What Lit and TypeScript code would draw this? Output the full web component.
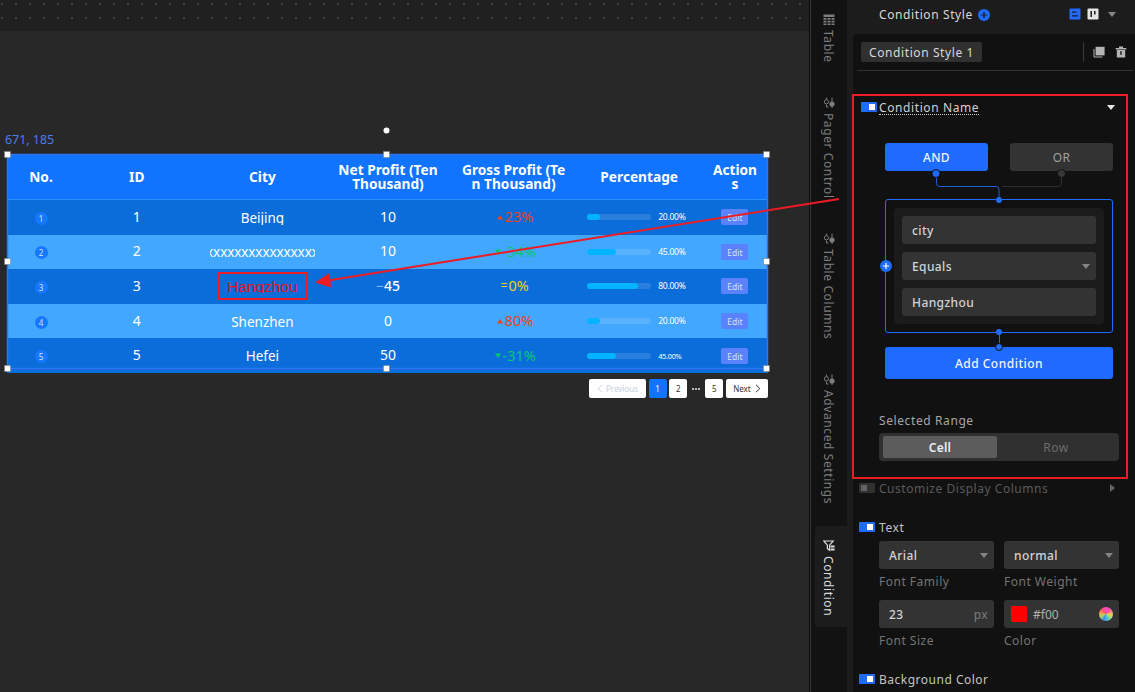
import { LitElement, css, html, svg } from "lit";
import { customElement, property } from "lit/decorators.js";
import { classMap } from "lit/directives/class-map.js";
import { styleMap } from "lit/directives/style-map.js";

interface Row {
  id: number;
  city: string;
  net: string;
  trend: "up" | "down" | "flat";
  gross: string;
  percent: number;
}

const rows: Row[] = [
  { id: 1, city: "Beijing", net: "10", trend: "up", gross: "23%", percent: 20 },
  { id: 2, city: "xxxxxxxxxxxxxxxxxx", net: "10", trend: "down", gross: "-34%", percent: 45 },
  { id: 3, city: "Hangzhou", net: "-45", trend: "flat", gross: "0%", percent: 80 },
  { id: 4, city: "Shenzhen", net: "0", trend: "up", gross: "80%", percent: 20 },
  { id: 5, city: "Hefei", net: "50", trend: "down", gross: "-31%", percent: 45 },
];

@customElement("data-table")
export class DataTable extends LitElement {
  static styles = css`
    :host {
      display: block;
      width: 761px;
      font-family: "Noto Sans", "Open Sans", sans-serif;
      font-size: 14px;
      color: #fff;
    }
    .row {
      display: grid;
      grid-template-columns: 66px repeat(5, 125.6px) 66px;
      align-items: center;
      justify-items: center;
      box-sizing: border-box;
      height: 34.6px;
      padding-left: 1px;
      background: #0b6dd9;
    }
    .row.even {
      background: #42a7ff;
    }
    .row.head {
      height: 46px;
      padding-top: 1px;
      border-bottom: 1px solid #2b90fb;
      background: #1074ff;
      font-weight: 700;
      font-size: 13.7px;
      line-height: 14px;
      text-align: center;
    }
    .head div {
      white-space: pre-line;
    }
    .index {
      width: 13px;
      height: 13px;
      margin-top: 2px;
      border-radius: 50%;
      background: #1677ff;
      font-size: 8px;
      line-height: 13px;
      text-align: center;
      color: #d5e6ff;
    }
    .value {
      line-height: 18px;
      margin-bottom: 1px;
    }
    .city {
      display: flex;
      justify-content: center;
      width: 105px;
      height: 15px;
      overflow: hidden;
      line-height: 16px;
      font-size: 13.5px;
      white-space: nowrap;
    }
    .city.hit {
      height: 14px;
      font-family: "Liberation Sans", Arial, sans-serif;
      font-size: 15.4px;
      line-height: 15px;
      color: #e3121f;
    }
    .city.long {
      letter-spacing: -0.1px;
    }
    .net .minus {
      font-weight: 300;
      opacity: 0.7;
    }
    .net .strong {
      font-weight: 500;
    }
    .gross {
      display: flex;
      align-items: center;
      gap: 1px;
      padding-left: 2px;
      font-size: 14.4px;
      line-height: 18px;
    }
    .gross svg {
      width: 8px;
      height: 8px;
    }
    .up {
      color: #ec4218;
    }
    .down {
      color: #07c868;
    }
    .flat {
      color: #f0cd1a;
    }
    .equals {
      font-size: 12px;
    }
    .progress {
      display: flex;
      align-items: center;
      gap: 7px;
      width: 104px;
      height: 12px;
      font-size: 8.6px;
      letter-spacing: -0.3px;
    }
    .progress.small {
      font-size: 7.4px;
    }
    .track {
      flex: none;
      width: 64px;
      height: 6px;
      border-radius: 3px;
      background: rgba(255, 255, 255, 0.13);
    }
    .fill {
      height: 6px;
      border-radius: 3px;
      background: #00b4ff;
    }
    .edit {
      width: 27px;
      height: 16px;
      border-radius: 2px;
      background: #5a82fc;
      font-size: 8.5px;
      line-height: 18px;
      text-align: center;
      color: #d6e1ff;
    }
  `;

  private renderTrend(trend: Row["trend"]) {
    if (trend === "flat") {
      return html`<span class="equals">=</span>`;
    }
    const points = trend === "up" ? "4,2 7,6.5 1,6.5" : "1,1.5 7,1.5 4,6";
    return html`
      <svg viewBox="0 0 8 8"><polygon points=${points} fill="currentColor" /></svg>
    `;
  }

  private renderRow(row: Row) {
    return html`
      <div class=${classMap({ row: true, even: row.id % 2 === 0 })}>
        <div class="index">${row.id}</div>
        <div class="value">${row.id}</div>
        <div
          class=${classMap({
            city: true,
            hit: row.city === "Hangzhou",
            long: row.city.length > 12,
          })}
        ><span>${row.city}</span></div>
        <div class="value net">
          ${row.net.startsWith("-")
            ? html`<span class="minus">−</span><span class="strong">${row.net.slice(1)}</span>`
            : row.net}
        </div>
        <div class="gross ${row.trend}">
          ${this.renderTrend(row.trend)}<span>${row.gross}</span>
        </div>
        <div class=${classMap({ progress: true, small: row.id === 5 })}>
          <div class="track">
            <div class="fill" style=${styleMap({ width: `${row.percent}%` })}></div>
          </div>
          <span>${row.percent.toFixed(2)}%</span>
        </div>
        <div class="edit">Edit</div>
      </div>
    `;
  }

  render() {
    return html`
      <div class="row head">
        <div>No.</div>
        <div>ID</div>
        <div>City</div>
        <div>${"Net Profit (Ten\nThousand)"}</div>
        <div>${"Gross Profit (Te\nn Thousand)"}</div>
        <div>Percentage</div>
        <div>${"Action\ns"}</div>
      </div>
      ${rows.map((row) => this.renderRow(row))}
    `;
  }
}

@customElement("table-pager")
export class TablePager extends LitElement {
  static styles = css`
    :host {
      display: flex;
      gap: 2.6px;
      font-family: "Noto Sans", "Open Sans", sans-serif;
      font-size: 8px;
      line-height: 19px;
      color: #333;
    }
    .page {
      display: flex;
      align-items: center;
      justify-content: center;
      width: 18px;
      height: 19px;
      border-radius: 2px;
      background: #fff;
    }
    .page.active {
      background: #1074ff;
      color: #fff;
    }
    .page.prev {
      gap: 3px;
      width: 57px;
      color: #c5cfe0;
    }
    .page.next {
      gap: 4px;
      width: 42px;
    }
    .page svg {
      width: 6px;
      height: 9px;
    }
    .dots {
      display: flex;
      align-items: center;
      justify-content: center;
      gap: 1px;
      width: 13px;
    }
    .dots i {
      width: 2px;
      height: 2px;
      border-radius: 1px;
      background: #eee;
    }
  `;

  render() {
    return html`
      <div class="page prev">
        <svg viewBox="0 0 6 9"><path d="M5 .8 1.2 4.5 5 8.2" fill="none" stroke="currentColor" /></svg>
        Previous
      </div>
      <div class="page active">1</div>
      <div class="page">2</div>
      <div class="dots"><i></i><i></i><i></i></div>
      <div class="page">5</div>
      <div class="page next">
        Next
        <svg viewBox="0 0 6 9"><path d="M1 .8 4.8 4.5 1 8.2" fill="none" stroke="currentColor" /></svg>
      </div>
    `;
  }
}

const tableIcon = svg`
  <path d="M.5 .5h11v2.6H.5zM.5 4h3v1.8h-3zM4.5 4h3v1.8h-3zM8.5 4h3v1.8h-3zM.5 6.7h3v1.8h-3zM4.5 6.7h3v1.8h-3zM8.5 6.7h3v1.8h-3zM.5 9.4h3v1.6h-3zM4.5 9.4h3v1.6h-3zM8.5 9.4h3v1.6h-3z" fill="currentColor" />
`;
const sliderIcon = svg`
  <path d="M3.4 .5v2M3.4 7.500v2.500h2M9 .5v10.5" fill="none" stroke="currentColor" />
  <circle cx="3.4" cy="4.800" r="2.1" fill="none" stroke="currentColor" />
  <circle cx="9" cy="7" r="2.6" fill="currentColor" />
`;
const funnelIcon = svg`
  <path d="M.8 1h9.4L6.6 5.2v5L4.4 8.6V5.2z" fill="none" stroke="currentColor" stroke-width="1.2" />
  <path d="M7.6 5.4h4v2h-4zM7.6 8.6h4v2h-4z" fill="currentColor" />
`;

@customElement("side-tabs")
export class SideTabs extends LitElement {
  static styles = css`
    :host {
      display: grid;
      grid-template-rows: 83px 136px 141px 166px 101px;
      flex: none;
      align-content: start;
      box-sizing: border-box;
      width: 37px;
      padding-left: 4px;
      border-left: 1px solid #363636;
      background: #121212;
      font-family: "Noto Sans", "Open Sans", sans-serif;
      font-size: 12px;
      letter-spacing: 0.6px;
      color: #7d7d7d;
    }
    .tab {
      display: flex;
      flex-direction: column;
      align-items: center;
      gap: 4px;
      box-sizing: border-box;
      padding: 14px 4px 0 0;
      border-radius: 4px 0 0 4px;
    }
    .tab.active {
      background: #1c1c1c;
      color: #dcdcdc;
    }
    .tab svg {
      flex: none;
      width: 12px;
      height: 12px;
    }
    .label {
      margin-right: 2px;
      writing-mode: vertical-rl;
      line-height: 16px;
      white-space: nowrap;
    }
  `;

  @property({ type: String }) selected = "Condition";

  private tabs = [
    { label: "Table", icon: tableIcon },
    { label: "Pager Control", icon: sliderIcon },
    { label: "Table Columns", icon: sliderIcon },
    { label: "Advanced Settings", icon: sliderIcon },
    { label: "Condition", icon: funnelIcon },
  ];

  render() {
    return this.tabs.map(
      (tab) => html`
        <div class=${classMap({ tab: true, active: tab.label === this.selected })}>
          <svg viewBox="0 0 12 12">${tab.icon}</svg>
          <span class="label">${tab.label}</span>
        </div>
      `
    );
  }
}

@customElement("condition-panel")
export class ConditionPanel extends LitElement {
  static styles = css`
    :host {
      display: block;
      flex: 1;
      min-width: 0;
      padding-left: 6px;
      background: #1c1c1c;
      font-family: "Noto Sans", "Open Sans", sans-serif;
      font-size: 12px;
      letter-spacing: 0.6px;
      color: #c4c4c4;
    }
    .header {
      display: flex;
      align-items: center;
      height: 28px;
      padding: 0 19px 6px 26px;
      color: #d8d8d8;
    }
    .header svg {
      flex: none;
    }
    .header .add {
      width: 12px;
      height: 12px;
      margin: 1px auto 0 5px;
    }
    .header .mode {
      width: 12px;
      height: 12px;
      margin-right: 6px;
    }
    .header .mode.board {
      margin-right: 9px;
    }
    .body {
      height: 658px;
      border-top-left-radius: 4px;
      background: #111;
    }
    .tabs {
      display: flex;
      align-items: center;
      box-sizing: border-box;
      height: 37px;
      margin: 0 2px 0 4px;
      padding: 0 6px 0 4px;
      border-bottom: 1px solid #323232;
    }
    .chip {
      width: 121px;
      height: 20px;
      margin-right: auto;
      border-radius: 2px;
      background: #303030;
      line-height: 21px;
      text-align: center;
      color: #d8d8d8;
    }
    .sep {
      width: 1px;
      height: 20px;
      margin-right: 9px;
      background: #3a3a3a;
    }
    .tabs svg {
      width: 12px;
      height: 12px;
    }
    .tabs .copy {
      margin-right: 10px;
    }
    .line {
      display: flex;
      align-items: center;
      height: 20px;
      padding: 0 20px 0 6px;
    }
    .line.name {
      padding: 26px 20px 0 8px;
      color: #d0d0d0;
    }
    .line.name .title {
      margin-left: 2px;
      padding-top: 2px;
      line-height: 13px;
      border-bottom: 1px dotted #ccc;
    }
    .line.off {
      margin-top: 17px;
      letter-spacing: 0.53px;
      color: #5a5a5a;
    }
    .line.text {
      margin-top: 19px;
    }
    .line.background {
      margin-top: 10px;
      letter-spacing: 0.5px;
    }
    .line .title {
      margin-left: 4px;
      margin-right: auto;
    }
    .toggle {
      display: flex;
      justify-content: flex-end;
      box-sizing: border-box;
      width: 16px;
      height: 10px;
      padding: 2px;
      border-radius: 1px;
      background: #1f6bff;
    }
    .toggle::after {
      content: "";
      width: 6px;
      height: 6px;
      background: #fff;
    }
    .off .toggle {
      justify-content: flex-start;
      background: #303030;
    }
    .off .toggle::after {
      background: #636363;
    }
    .caret {
      width: 8px;
      height: 5px;
      flex: none;
    }
    .logic {
      display: flex;
      justify-content: space-between;
      margin: 26px 22px 0 32px;
    }
    .logic div {
      width: 103px;
      height: 28px;
      border-radius: 3px;
      background: #333;
      line-height: 29px;
      text-align: center;
      letter-spacing: 0.3px;
      color: #a0a0a0;
    }
    .logic .active {
      background: #1f6bff;
      font-weight: 500;
      color: #eef3ff;
    }
    .wires {
      display: block;
      position: relative;
      width: 228px;
      height: 34px;
      margin: -4px 0 -2px 32px;
      overflow: visible;
      z-index: 1;
    }
    .group {
      position: relative;
      box-sizing: border-box;
      width: 228px;
      height: 134px;
      margin-left: 32px;
      padding: 8px;
      border: 1px solid #1f6bff;
      border-radius: 3px;
    }
    .group .plus {
      position: absolute;
      left: -6px;
      top: 60px;
      width: 12px;
      height: 12px;
    }
    .fields {
      display: grid;
      gap: 8px;
      padding: 8px;
      border-radius: 4px;
      background: #1b1b1b;
    }
    .field {
      display: flex;
      align-items: center;
      justify-content: space-between;
      box-sizing: border-box;
      height: 28px;
      padding: 1px 6px 0 10px;
      border-radius: 3px;
      background: #333;
      font-weight: 500;
      letter-spacing: 0.4px;
      color: #d4d4d4;
    }
    .link {
      display: block;
      position: relative;
      width: 228px;
      height: 24px;
      margin: -5px 0 -5px 32px;
      z-index: 1;
    }
    .submit {
      width: 228px;
      height: 32px;
      margin-left: 32px;
      border-radius: 3px;
      background: #1f6bff;
      font-weight: 500;
      letter-spacing: 0.5px;
      line-height: 34px;
      text-align: center;
      color: #eef3ff;
    }
    .range-label {
      margin: 32px 0 2px 26px;
      line-height: 20px;
      color: #a6a6a6;
    }
    .segment {
      display: flex;
      box-sizing: border-box;
      width: 240px;
      height: 28px;
      margin-left: 26px;
      padding: 3px 4px;
      border-radius: 4px;
      background: #303030;
      line-height: 23px;
      text-align: center;
      color: #6c6c6c;
    }
    .segment div {
      flex: 1;
      border-radius: 2px;
    }
    .segment .active {
      flex: none;
      width: 114px;
      background: #5c5c5c;
      font-weight: 600;
      letter-spacing: 0.2px;
      color: #eee;
    }
    .form {
      display: grid;
      grid-template-columns: 115px 115px;
      column-gap: 10px;
      margin: 4px 0 0 26px;
    }
    .form .caption {
      height: 31px;
      line-height: 26px;
      letter-spacing: 0.5px;
      color: #747474;
    }
    .unit {
      font-weight: 400;
      color: #7c7c7c;
    }
    .field.color {
      justify-content: flex-start;
      gap: 6px;
      padding: 0 6px 0 7px;
      font-weight: 400;
      letter-spacing: 0;
      color: #b0b0b0;
    }
    .swatch {
      width: 16px;
      height: 16px;
      border-radius: 1px;
      background: #f00;
    }
    .wheel {
      width: 14px;
      height: 14px;
      margin-left: auto;
      border-radius: 50%;
      background: conic-gradient(#f04fd0, #ff4f9c 12%, #f0c060 24%, #b8e060 33%, #50c8d0 45%, #4090e8 56%, #b0d860 68%, #f0a050 78%, #ff5060 88%, #f04fd0);
    }
  `;

  private renderCaret(color: string) {
    return html`
      <svg class="caret" viewBox="0 0 8 5"><path d="M0 0h8L4 5z" fill=${color} /></svg>
    `;
  }

  private renderSelect(value: string) {
    return html`<div class="field"><span>${value}</span>${this.renderCaret("#858585")}</div>`;
  }

  render() {
    return html`
      <div class="header">
        <span>Condition Style</span>
        <svg class="add" viewBox="0 0 12 12">
          <circle cx="6" cy="6" r="6" fill="#1f6bff" />
          <path d="M6 2.8v6.4M2.8 6h6.4" stroke="#1c1c1c" stroke-width="1.2" />
        </svg>
        <svg class="mode" viewBox="0 0 12 12">
          <rect x=".5" y=".5" width="11" height="11" rx="1" fill="#1f6bff" />
          <path d="M3 4.2h4.5M3 7.8h6" stroke="#1c1c1c" stroke-width="1.3" />
        </svg>
        <svg class="mode board" viewBox="0 0 12 12">
          <rect x=".5" y=".5" width="11" height="11" rx="1" fill="#e4e4e4" />
          <path d="M4.2 3v6M7.8 3v3.5" stroke="#1c1c1c" stroke-width="1.5" />
        </svg>
        ${this.renderCaret("#858585")}
      </div>

      <div class="body">
        <div class="tabs">
          <div class="chip">Condition Style 1</div>
          <div class="sep"></div>
          <svg class="copy" viewBox="0 0 12 12">
            <path d="M2.6 .8h9v8.6h-9z" fill="#b4b4b4" />
            <path d="M1 3v8h8.4" fill="none" stroke="#b4b4b4" />
          </svg>
          <svg viewBox="0 0 12 12">
            <path d="M4 .5h4V2h3.3v1.4H.7V2H4zM1.8 4h8.4v7.6H1.8z" fill="#b4b4b4" />
            <path d="M6 5.2v3.6" stroke="#111" stroke-width="1.4" />
          </svg>
        </div>

        <div class="line name">
          <span class="toggle"></span>
          <span class="title">Condition Name</span>
          ${this.renderCaret("#e8e8e8")}
        </div>

        <div class="logic">
          <div class="active">AND</div>
          <div>OR</div>
        </div>
        <svg class="wires" viewBox="0 0 228 34">
          <path d="M176.500 6v10.500q0 3-3 3H117" fill="none" stroke="#303030" />
          <path d="M51.500 6v10.500q0 3 3 3H111q3 0 3 3V33" fill="none" stroke="#1f5fdd" />
          <circle cx="51" cy="6.500" r="4" fill="#1f6bff" stroke="#111" />
          <circle cx="176.500" cy="6.500" r="4" fill="#383838" stroke="#111" />
          <circle cx="114" cy="33" r="3" fill="#1f6bff" />
        </svg>
        <div class="group">
          <div class="fields">
            <div class="field">city</div>
            ${this.renderSelect("Equals")}
            <div class="field">Hangzhou</div>
          </div>
          <svg class="plus" viewBox="0 0 12 12">
            <circle cx="6" cy="6" r="6" fill="#1f6bff" />
            <path d="M6 3v6M3 6h6" stroke="#fff" stroke-width="1.2" />
          </svg>
        </div>
        <svg class="link" viewBox="0 0 228 24">
          <path d="M114.500 4v16" stroke="#1f6bff" />
          <circle cx="114" cy="4" r="3" fill="#1f6bff" />
          <circle cx="114" cy="19" r="3.500" fill="#1f6bff" stroke="#111" />
        </svg>
        <div class="submit">Add Condition</div>

        <div class="range-label">Selected Range</div>
        <div class="segment">
          <div class="active">Cell</div>
          <div>Row</div>
        </div>

        <div class="line off">
          <span class="toggle"></span>
          <span class="title">Customize Display Columns</span>
          <svg width="5" height="8" viewBox="0 0 5 8"><path d="M0 0v8l5-4z" fill="#666" /></svg>
        </div>

        <div class="line text">
          <span class="toggle"></span>
          <span class="title">Text</span>
        </div>
        <div class="form">
          ${this.renderSelect("Arial")} ${this.renderSelect("normal")}
          <span class="caption">Font Family</span>
          <span class="caption">Font Weight</span>
          <div class="field"><span>23</span><span class="unit">px</span></div>
          <div class="field color">
            <span class="swatch"></span><span>#f00</span><span class="wheel"></span>
          </div>
          <span class="caption">Font Size</span>
          <span class="caption">Color</span>
        </div>

        <div class="line background">
          <span class="toggle"></span>
          <span class="title">Background Color</span>
        </div>
      </div>
    `;
  }
}

@customElement("app-root")
export class AppRoot extends LitElement {
  static styles = css`
    :host {
      display: flex;
      position: relative;
      width: 1135px;
      height: 692px;
      overflow: hidden;
      background: #282828;
      font-family: "Noto Sans", "Open Sans", sans-serif;
    }
    .canvas {
      position: relative;
      flex: none;
      box-sizing: border-box;
      width: 810px;
      border-right: 1px solid #0a0a0a;
    }
    .grid {
      display: block;
      width: 100%;
      height: 31px;
      background: #202020;
    }
    .coords {
      position: absolute;
      left: 5px;
      top: 131px;
      font-size: 12.4px;
      line-height: 17px;
      color: #4b7ee8;
    }
    .table {
      position: absolute;
      left: 7px;
      top: 154px;
      height: 219px;
      overflow: hidden;
    }
    .selection {
      position: absolute;
      left: 4px;
      top: 127px;
      width: 767px;
      height: 246px;
    }
    .pager {
      position: absolute;
      left: 589px;
      top: 379px;
    }
    .marks {
      position: absolute;
      left: 0;
      top: 0;
      width: 1135px;
      height: 692px;
      pointer-events: none;
      z-index: 2;
    }
  `;

  private handles = [
    [0, 24],
    [379, 24],
    [759, 24],
    [0, 131],
    [759, 131],
    [0, 238],
    [379, 238],
    [759, 238],
  ];

  render() {
    return html`
      <div class="canvas">
        <svg class="grid">
          <defs>
            <pattern id="dots" width="14" height="14" patternUnits="userSpaceOnUse">
              <rect x="1" y="3" width="2" height="2" fill="#424242" />
            </pattern>
          </defs>
          <rect width="809" height="28" fill="url(#dots)" />
        </svg>
        <div class="coords">671, 185</div>
        <data-table class="table"></data-table>
        <svg class="selection">
          <rect x="3.5" y="27.500" width="760" height="214" fill="none" stroke="#2f74f0" stroke-width="1.500" />
          <circle cx="382.500" cy="3.500" r="3" fill="#fff" />
          ${this.handles.map(
            ([x, y]) => svg`<rect x=${x + 0.5} y=${y + 0.5} width="6" height="6" fill="#fff" stroke="#777" stroke-width=".5" />`
          )}
        </svg>
        <table-pager class="pager"></table-pager>
      </div>
      <side-tabs selected="Condition"></side-tabs>
      <condition-panel></condition-panel>
      <svg class="marks">
        <g fill="none" stroke="#ed1c24" stroke-width="2">
          <rect x="219" y="273" width="88" height="26" />
          <rect x="853" y="95" width="274" height="383" />
          <path d="M839 199 328 280.500" />
        </g>
        <path d="M315 282.500 329.500 273 331 287.500z" fill="#ed1c24" />
      </svg>
    `;
  }
}
